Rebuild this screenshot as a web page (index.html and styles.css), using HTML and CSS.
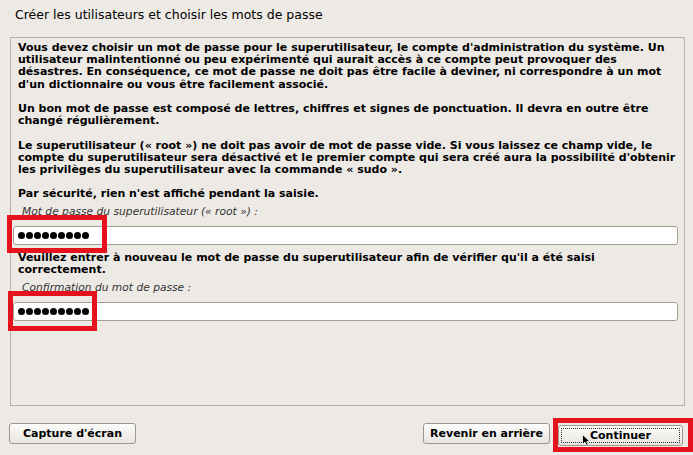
FILE: index.html
```html
<!DOCTYPE html>
<html lang="fr">
<head>
    <meta charset="UTF-8">
    <title>Créer les utilisateurs et choisir les mots de passe</title>
    <link rel="stylesheet" href="styles.css">
</head>
<body>
    <div class="window">
        <h1 class="title">Créer les utilisateurs et choisir les mots de passe</h1>

        <div class="panel">
            <p class="text">Vous devez choisir un mot de passe pour le superutilisateur, le compte d'administration du système. Un<br>
            utilisateur malintentionné ou peu expérimenté qui aurait accès à ce compte peut provoquer des<br>
            désastres. En conséquence, ce mot de passe ne doit pas être facile à deviner, ni correspondre à un mot<br>
            d'un dictionnaire ou vous être facilement associé.</p>
            <p class="text">Un bon mot de passe est composé de lettres, chiffres et signes de ponctuation. Il devra en outre être<br>
            changé régulièrement.</p>
            <p class="text">Le superutilisateur (« root ») ne doit pas avoir de mot de passe vide. Si vous laissez ce champ vide, le<br>
            compte du superutilisateur sera désactivé et le premier compte qui sera créé aura la possibilité d'obtenir<br>
            les privilèges du superutilisateur avec la commande « sudo ».</p>
            <p class="text text-last">Par sécurité, rien n'est affiché pendant la saisie.</p>

            <label class="field-label" for="pw1">Mot de passe du superutilisateur (« root ») :</label>
            <div class="field">
                <div class="entry" id="pw1">
                    <span class="dot"></span><span class="dot"></span><span class="dot"></span>
                    <span class="dot"></span><span class="dot"></span><span class="dot"></span>
                    <span class="dot"></span><span class="dot"></span><span class="dot"></span>
                </div>
                <div class="mark mark-pw1"></div>
            </div>

            <p class="text text-again">Veuillez entrer à nouveau le mot de passe du superutilisateur afin de vérifier qu'il a été saisi<br>
            correctement.</p>

            <label class="field-label field-label-2" for="pw2">Confirmation du mot de passe :</label>
            <div class="field">
                <div class="entry" id="pw2">
                    <span class="dot"></span><span class="dot"></span><span class="dot"></span>
                    <span class="dot"></span><span class="dot"></span><span class="dot"></span>
                    <span class="dot"></span><span class="dot"></span><span class="dot"></span>
                </div>
                <div class="mark mark-pw2"></div>
            </div>
        </div>

        <div class="buttons">
            <button class="btn">Capture d'écran</button>
            <div class="spacer"></div>
            <button class="btn">Revenir en arrière</button>
            <div class="btn-wrap">
                <button class="btn btn-focus"><span class="focus-ring">Continuer</span></button>
                <div class="mark mark-next"></div>
                <svg class="cursor" width="9" height="13" viewBox="0 0 9 13">
                    <path d="M0.5 0.5 L0.5 10.5 L3 8.2 L4.8 12.3 L6.4 11.6 L4.7 7.6 L8 7.6 Z" fill="#000" stroke="#fff" stroke-width="0.8"/>
                </svg>
            </div>
        </div>
    </div>
</body>
</html>
```

FILE: styles.css
```css
body {
    margin: 0;
    background-color: #edeae6;
    font-family: "DejaVu Sans", sans-serif;
    color: #000;
    overflow: hidden;
}
.window {
    display: flex;
    flex-direction: column;
    height: 455px;
}
.title {
    margin: 0;
    padding: 8px 15px 0;
    font-size: 12.5px;
    font-weight: normal;
    line-height: 14px;
    height: 37px;
    box-sizing: border-box;
}
.panel {
    margin: 0 8px 0 10px;
    height: 369px;
    box-sizing: border-box;
    border: 1px solid #b9b1a5;
    padding: 4px 6px 0 2px;
}
.text {
    margin: 0 0 12.2px 5px;
    font-size: 11px;
    font-weight: bold;
    line-height: 12.2px;
    white-space: nowrap;
}
.text-last {
    margin-bottom: 4px;
}
.text-again {
    margin: 7px 0 5px 5px;
}
.field-label {
    display: block;
    margin: 0 0 8px 9px;
    font-size: 10.7px;
    font-style: italic;
    color: #333;
    line-height: 13px;
}
.field {
    position: relative;
}
.entry {
    display: flex;
    align-items: center;
    gap: 1px;
    height: 19px;
    box-sizing: border-box;
    background-color: #fff;
    border: 1px solid #a49d92;
    border-radius: 3px;
    padding: 0 0 0 4px;
}
.dot {
    width: 7px;
    height: 7px;
    border-radius: 50%;
    background-color: #000;
}

/* red annotation boxes drawn over the screenshot */
.mark {
    position: absolute;
    box-sizing: border-box;
    border: 5px solid #e4121c;
}
.mark-pw1 {
    left: -6px;
    top: -11px;
    width: 100px;
    height: 38px;
}
.mark-pw2 {
    left: -5px;
    top: -11px;
    width: 89px;
    height: 40px;
}
.mark-next {
    left: -5px;
    top: -6px;
    width: 140px;
    height: 34px;
}

.buttons {
    display: flex;
    align-items: flex-start;
    margin: 17px 10px 0 9px;
}
.spacer {
    flex: 1;
}
.btn {
    width: 127px;
    height: 21px;
    padding: 0;
    border: 1px solid #9d968b;
    border-radius: 3px;
    background: linear-gradient(#fcfcfb, #e8e5e0);
    font-family: "DejaVu Sans", sans-serif;
    font-size: 11px;
    font-weight: bold;
    color: #000;
}
.btn-wrap {
    position: relative;
    margin-left: 8px;
    margin-top: 1px;
}
.btn-focus {
    width: 125px;
    height: 21px;
    padding: 2px;
}
.focus-ring {
    display: block;
    height: 100%;
    box-sizing: border-box;
    border: 1px dotted #333;
    line-height: 14px;
}
.cursor {
    position: absolute;
    left: 24px;
    top: 10px;
}
```
